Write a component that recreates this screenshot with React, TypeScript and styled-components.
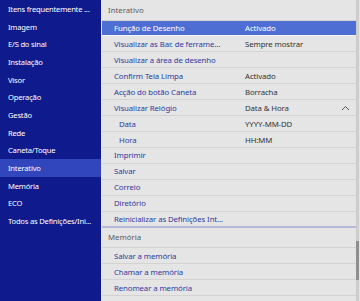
import React from "react";
import styled, { createGlobalStyle } from "styled-components";

const GlobalStyle = createGlobalStyle`
  html, body {
    margin: 0;
    padding: 0;
    height: 301px;
    overflow: hidden;
    background: #e5e5e5;
  }
  body {
    font-family: "Noto Sans", "Open Sans", sans-serif;
  }
`;

const Screen = styled.div`
  display: flex;
  width: 360px;
  height: 301px;
  overflow: hidden;
`;

const Sidebar = styled.div`
  width: 101px;
  flex-shrink: 0;
  background: #0f1b8d;
  display: flex;
  flex-direction: column;
  overflow: hidden;
`;

const SideItem = styled.div<{ $active?: boolean }>`
  height: 17.7px;
  flex-shrink: 0;
  display: flex;
  align-items: center;
  padding-left: 8px;
  font-size: 7.6px;
  letter-spacing: -0.2px;
  color: #ffffff;
  white-space: nowrap;
  overflow: hidden;
  background: ${(p) => (p.$active ? "#3145bd" : "transparent")};
`;

const Panel = styled.div`
  flex: 1;
  display: flex;
  flex-direction: column;
  background: #e5e5e5;
  padding-left: 1px;
  overflow: hidden;
`;

const GroupHeader = styled.div`
  height: 20.5px;
  flex-shrink: 0;
  display: flex;
  align-items: center;
  padding-left: 6px;
  font-size: 7.8px;
  color: #5a5a5a;
  border-bottom: 1px solid #d3d3d3;
  box-sizing: border-box;
`;

const Row = styled.div<{ $active?: boolean; $last?: boolean }>`
  height: 15.95px;
  flex-shrink: 0;
  box-sizing: border-box;
  display: flex;
  align-items: center;
  font-size: 7.8px;
  letter-spacing: -0.1px;
  border-bottom: ${(p) =>
    p.$last ? "2px solid #b3b9d6" : p.$active ? "1px solid #f4f4f4" : "1px solid #d3d3d3"};
  background: ${(p) => (p.$active ? "#4f6ed3" : "transparent")};
  color: ${(p) => (p.$active ? "#ffffff" : "#2e3b9c")};
`;

const Label = styled.div<{ $sub?: boolean }>`
  width: ${(p) => (p.$sub ? 126 : 131)}px;
  padding-left: ${(p) => (p.$sub ? 17 : 12)}px;
  white-space: nowrap;
  overflow: hidden;
`;

const Value = styled.div<{ $active?: boolean }>`
  flex: 1;
  color: ${(p) => (p.$active ? "#ffffff" : "#333333")};
  white-space: nowrap;
`;

const Chevron = styled.svg`
  width: 9px;
  height: 6px;
  margin-right: 6px;
`;

const Scrollbar = styled.div`
  width: 4px;
  flex-shrink: 0;
  display: flex;
  flex-direction: column;
  background: #e5e5e5;
`;

const Track = styled.div`
  width: 3px;
  flex: 1;
  background: #cdcdcd;
  display: flex;
  flex-direction: column;
  padding-top: 241px;
`;

const Thumb = styled.div`
  height: 39px;
  background: #8e8e8e;
`;

const sideItems = [
  "Itens frequentemente ...",
  "Imagem",
  "E/S do sinal",
  "Instalação",
  "Visor",
  "Operação",
  "Gestão",
  "Rede",
  "Caneta/Toque",
  "Interativo",
  "Memória",
  "ECO",
  "Todos as Definições/Ini...",
];

type Item = { label: string; value?: string; sub?: boolean; open?: boolean };

const interativo: Item[] = [
  { label: "Função de Desenho", value: "Activado" },
  { label: "Visualizar as Bar. de ferrame...", value: "Sempre mostrar" },
  { label: "Visualizar a área de desenho" },
  { label: "Confirm Tela Limpa", value: "Activado" },
  { label: "Acção do botão Caneta", value: "Borracha" },
  { label: "Visualizar Relógio", value: "Data & Hora", open: true },
  { label: "Data", value: "YYYY-MM-DD", sub: true },
  { label: "Hora", value: "HH:MM", sub: true },
  { label: "Imprimir" },
  { label: "Salvar" },
  { label: "Correio" },
  { label: "Diretório" },
  { label: "Reinicializar as Definições Int..." },
];

const memoria: Item[] = [
  { label: "Salvar a memória" },
  { label: "Chamar a memória" },
  { label: "Renomear a memória" },
  { label: "Apagar a memória" },
];

const App = () => {
  return (
    <>
      <GlobalStyle />
      <Screen>
        <Sidebar>
          {sideItems.map((s) => (
            <SideItem key={s} $active={s === "Interativo"}>
              {s}
            </SideItem>
          ))}
        </Sidebar>
        <Panel>
          <GroupHeader>Interativo</GroupHeader>
          {interativo.map((it, i) => (
            <Row key={it.label} $active={i === 0} $last={i === interativo.length - 1}>
              <Label $sub={it.sub}>{it.label}</Label>
              <Value $active={i === 0}>{it.value}</Value>
              {it.open && (
                <Chevron viewBox="0 0 9 6">
                  <path d="M1 5 L4.5 1.5 L8 5" fill="none" stroke="#555" strokeWidth="1" />
                </Chevron>
              )}
            </Row>
          ))}
          <GroupHeader>Memória</GroupHeader>
          {memoria.map((it) => (
            <Row key={it.label}>
              <Label>{it.label}</Label>
            </Row>
          ))}
        </Panel>
        <Scrollbar>
          <Track>
            <Thumb />
          </Track>
        </Scrollbar>
      </Screen>
    </>
  );
};

export default App;
